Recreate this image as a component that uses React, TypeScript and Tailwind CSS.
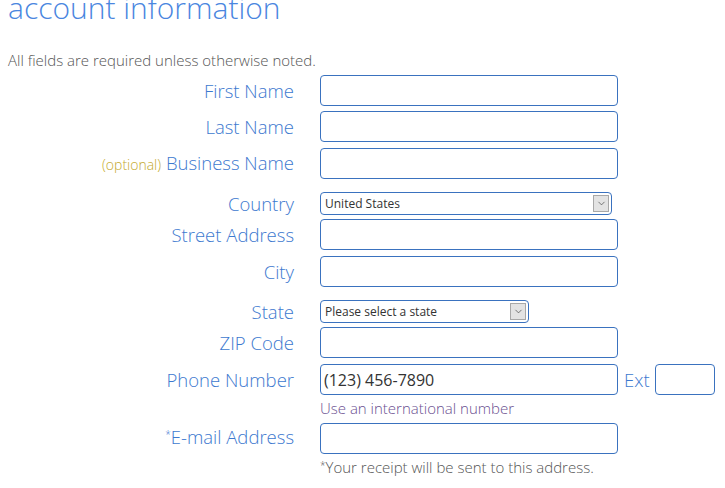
import { ChevronDown } from 'lucide-react'

const label = 'w-[286px] shrink-0 text-right text-[18.5px] font-light leading-[22px] text-[#3d79cf]'
const box = 'h-[31px] w-[298px] rounded-[4px] border border-[#3a72bf] bg-white'

function Row({ mt, children, name }: { mt: string; name: React.ReactNode; children: React.ReactNode }) {
  return (
    <div className={`flex items-center ${mt}`}>
      <div className={label}>{name}</div>
      <div className="ml-[26px] flex items-center">{children}</div>
    </div>
  )
}

function FakeSelect({ value, width }: { value: string; width: string }) {
  return (
    <div className={`relative h-[23px] ${width} rounded-[4px] border border-[#3a72bf] bg-white`}>
      <span className="absolute left-[4px] top-[3px] text-[12px] leading-[16px] text-[#333]">{value}</span>
      <span className="absolute right-[2px] top-[2px] flex h-[17px] w-[16px] items-center justify-center border border-[#a8a8a8] bg-[#e3e3e3]">
        <ChevronDown size={11} strokeWidth={1.5} className="text-[#444]" />
      </span>
    </div>
  )
}

export default function App() {
  return (
    <div className="h-[488px] w-[725px] overflow-hidden bg-white pl-2 font-['Open_Sans',sans-serif]">
      <h1 className="-mt-[7px] text-[30px] font-light leading-none text-[#4a86df]">account information</h1>
      <p className="mt-[27px] text-[15px] font-light leading-[20px] text-[#555]">
        All fields are required unless otherwise noted.
      </p>

      <div className="flex flex-col">
        <Row mt="mt-[5px]" name="First Name">
          <div className={box} />
        </Row>
        <Row mt="mt-[5px]" name="Last Name">
          <div className={box} />
        </Row>
        <Row
          mt="mt-[6px]"
          name={
            <>
              <span className="text-[14px] text-[#c4a92e]">(optional)</span> Business Name
            </>
          }
        >
          <div className={box} />
        </Row>
        <Row mt="mt-[13px]" name="Country">
          <FakeSelect value="United States" width="w-[292px]" />
        </Row>
        <Row mt="mt-[4px]" name="Street Address">
          <div className={box} />
        </Row>
        <Row mt="mt-[6px]" name="City">
          <div className={box} />
        </Row>
        <Row mt="mt-[13px]" name="State">
          <FakeSelect value="Please select a state" width="w-[209px]" />
        </Row>
        <Row mt="mt-[4px]" name="ZIP Code">
          <div className={box} />
        </Row>
        <Row mt="mt-[6px]" name="Phone Number">
          <div className={`${box} flex items-center px-[3px] text-[16px] text-[#333]`}>(123) 456-7890</div>
          <span className="ml-[6px] text-[18.5px] font-light text-[#3d79cf]">Ext</span>
          <div className="ml-[5px] h-[31px] w-[60px] rounded-[4px] border border-[#3a72bf] bg-white" />
        </Row>
        <div className="ml-[312px] mt-[3px] text-[15px] font-light leading-[20px] text-[#6a4f90]">
          Use an international number
        </div>
        <Row
          mt="mt-[5px]"
          name={
            <>
              <span className="relative -top-[6px] text-[10px]">*</span>E-mail Address
            </>
          }
        >
          <div className={box} />
        </Row>
        <div className="ml-[312px] mt-[3px] text-[15px] font-light leading-[20px] text-[#555]">
          <span className="relative -top-[4px] text-[10px]">*</span>Your receipt will be sent to this address.
        </div>
      </div>
    </div>
  )
}
